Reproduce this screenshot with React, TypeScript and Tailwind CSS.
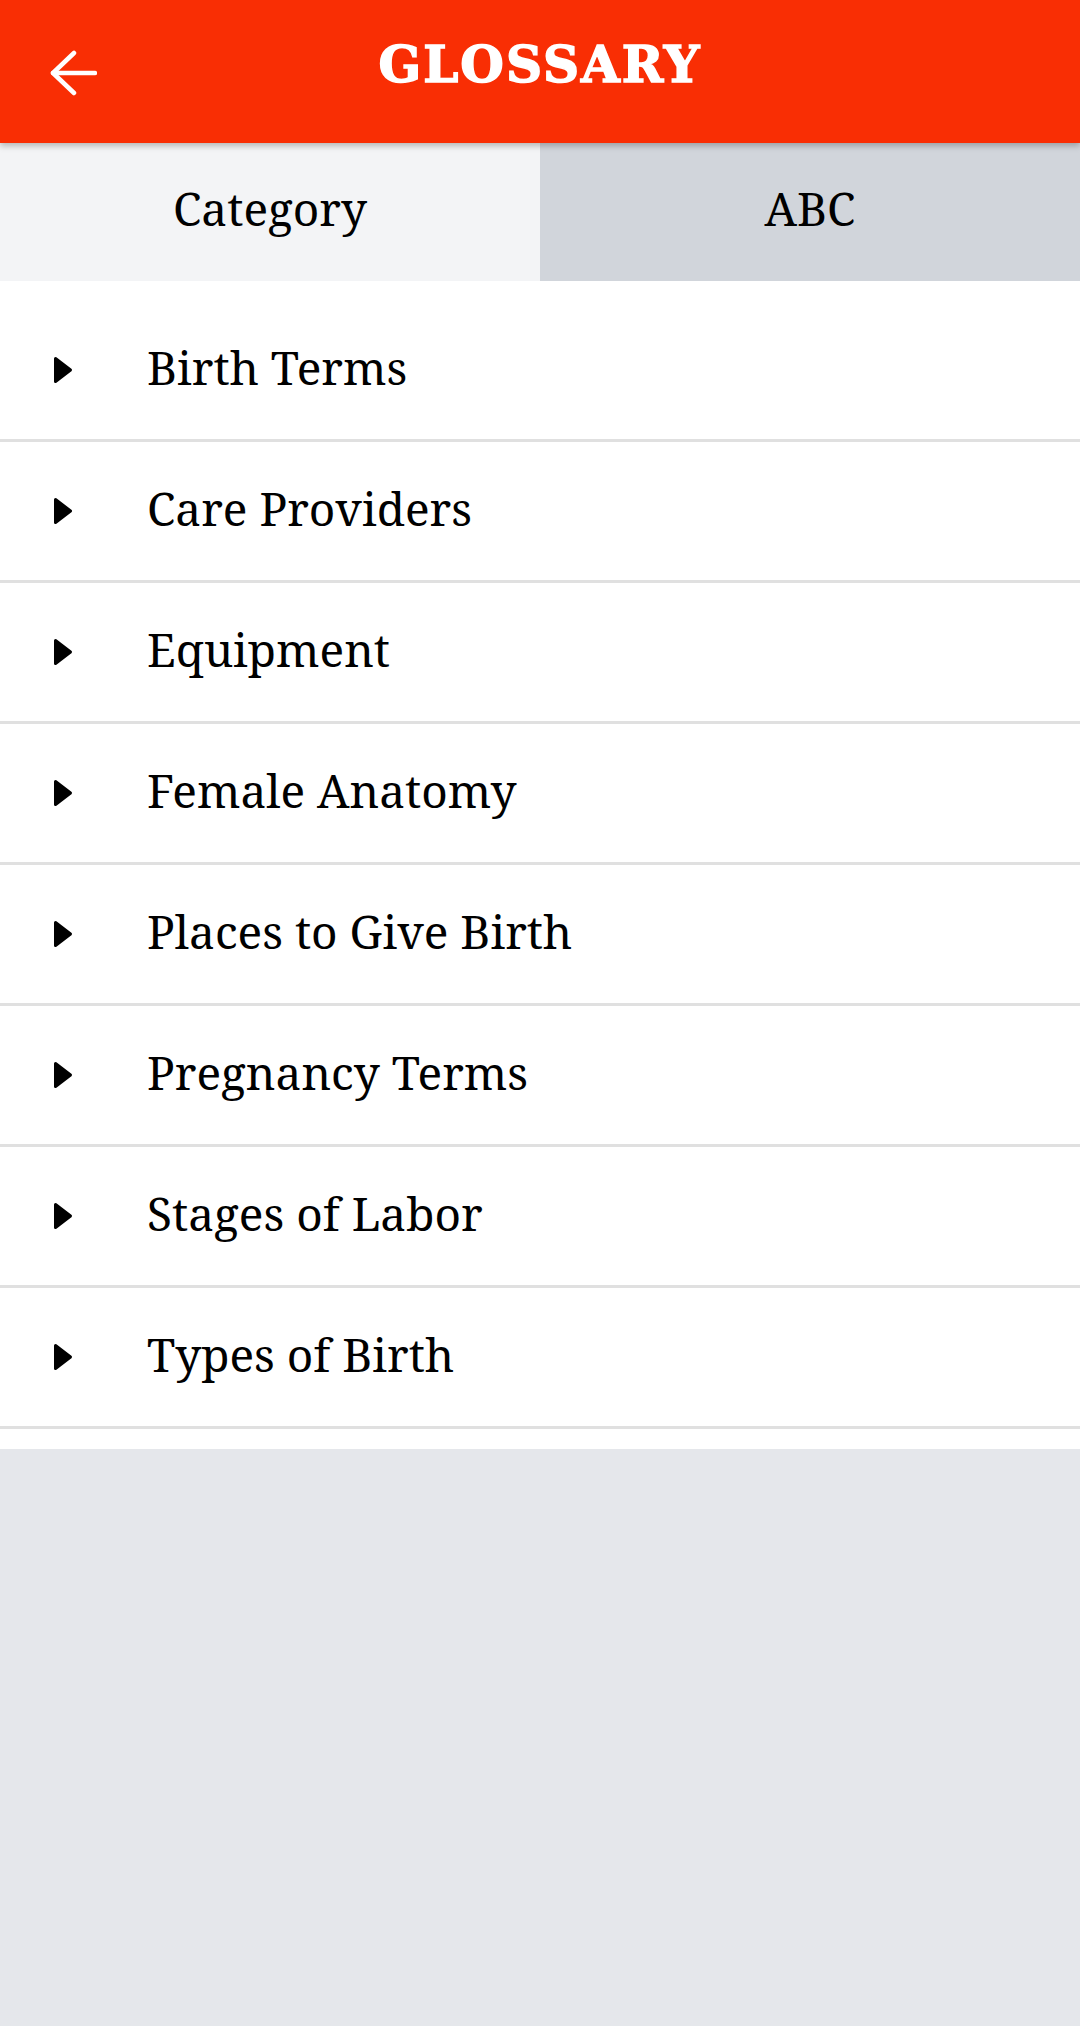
import React from "react";

const serif = { fontFamily: '"Noto Serif", "DejaVu Serif", serif' };

const categories = [
  "Birth Terms",
  "Care Providers",
  "Equipment",
  "Female Anatomy",
  "Places to Give Birth",
  "Pregnancy Terms",
  "Stages of Labor",
  "Types of Birth",
];

function BackArrow() {
  return (
    <svg width="48" height="46" viewBox="0 0 48 46" fill="none" stroke="white" strokeWidth="4.5" strokeLinecap="round" strokeLinejoin="round">
      <path d="M4 23 H46" />
      <path d="M25 3 L4 23 L25 43" />
    </svg>
  );
}

function Caret() {
  return (
    <svg width="20" height="28" viewBox="0 0 20 28" fill="black" stroke="black" strokeWidth="3" strokeLinejoin="round">
      <path d="M2.5 2.5 L17.5 14 L2.5 25.5 Z" />
    </svg>
  );
}

export default function App() {
  return (
    <div className="min-h-[2026px] w-[1080px] bg-[#e5e7eb] flex flex-col" style={serif}>
      <header className="relative z-10 h-[143px] bg-[#f92e04] flex items-center shadow-[0_3px_6px_rgba(0,0,0,0.25)]">
        <div className="pl-[49px] pt-[2px] flex items-center">
          <BackArrow />
        </div>
        <h1
          className="absolute left-0 right-0 top-[37px] text-center text-white text-[50px] leading-[56px] font-black tracking-[2px] [-webkit-text-stroke:1.5px_white]"
          style={{ fontFamily: '"DejaVu Serif", serif' }}
        >
          GLOSSARY
        </h1>
      </header>

      <nav className="grid grid-cols-2 h-[138px]">
        <div className="bg-[#f3f4f6] flex items-center justify-center text-[46px] text-black pb-[7px]">
          Category
        </div>
        <div className="bg-[#d1d5db] flex items-center justify-center text-[46px] text-black pb-[7px]">
          ABC
        </div>
      </nav>

      <ul className="bg-white py-[20px]">
        {categories.map((c) => (
          <li
            key={c}
            className="h-[141px] flex items-center border-b-[3px] border-[#e0e0e0]"
          >
            <div className="w-[147px] pl-[53px] flex items-center">
              <Caret />
            </div>
            <span className="text-[46px] text-black leading-none mb-[6px]">{c}</span>
          </li>
        ))}
      </ul>
    </div>
  );
}
